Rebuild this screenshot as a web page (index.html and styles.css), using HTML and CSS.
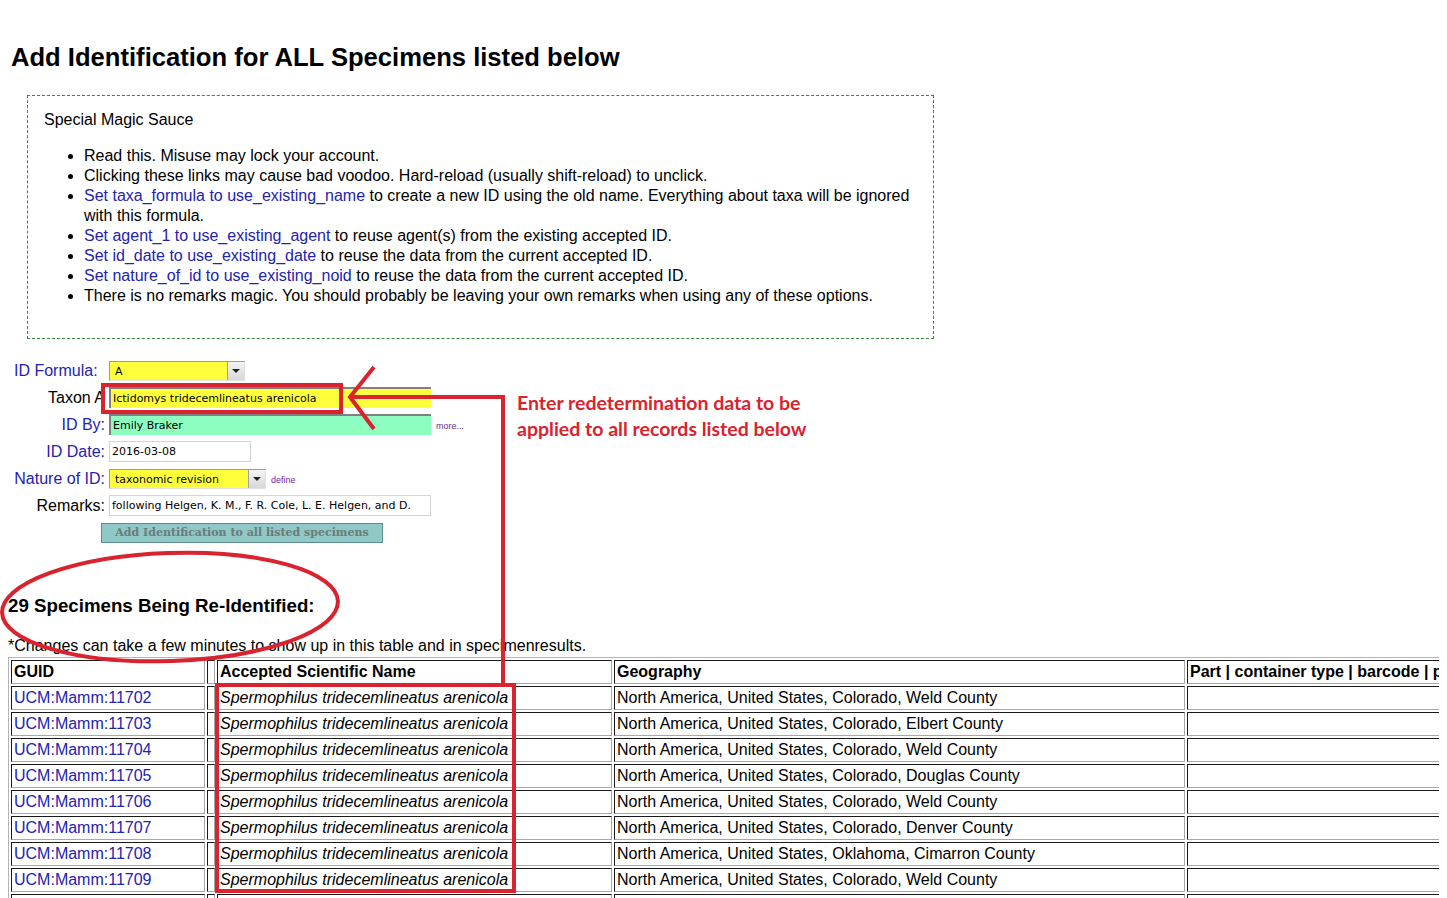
FILE: index.html
```html
<!DOCTYPE html>
<html lang="en">
<head>
    <meta charset="UTF-8">
    <title>Add Identification</title>
    <link rel="stylesheet" href="styles.css">
</head>
<body>
    <h2 class="page-title">Add Identification for ALL Specimens listed below</h2>

    <div class="magic-box">
        <div>Special Magic Sauce</div>
        <ul>
            <li>Read this. Misuse may lock your account.</li>
            <li>Clicking these links may cause bad voodoo. Hard-reload (usually shift-reload) to unclick.</li>
            <li><a href="#">Set taxa_formula to use_existing_name</a> to create a new ID using the old name. Everything about taxa will be ignored with this formula.</li>
            <li><a href="#">Set agent_1 to use_existing_agent</a> to reuse agent(s) from the existing accepted ID.</li>
            <li><a href="#">Set id_date to use_existing_date</a> to reuse the data from the current accepted ID.</li>
            <li><a href="#">Set nature_of_id to use_existing_noid</a> to reuse the data from the current accepted ID.</li>
            <li>There is no remarks magic. You should probably be leaving your own remarks when using any of these options.</li>
        </ul>
    </div>

    <form class="id-form">
        <label class="lbl lbl-link lbl-left">ID Formula:</label>
        <div class="field">
            <div class="fake-select sel-formula"><span class="sel-text">A</span><span class="sel-arrow"></span></div>
        </div>

        <label class="lbl">Taxon A</label>
        <div class="field"><input class="txt txt-yellow" type="text" value="Ictidomys tridecemlineatus arenicola"></div>

        <label class="lbl lbl-link">ID By:</label>
        <div class="field"><input class="txt txt-green" type="text" value="Emily Braker"><span class="tiny-link">more...</span></div>

        <label class="lbl lbl-link">ID Date:</label>
        <div class="field"><input class="txt txt-plain txt-date" type="text" value="2016-03-08"></div>

        <label class="lbl lbl-link">Nature of ID:</label>
        <div class="field">
            <div class="fake-select sel-nature"><span class="sel-text">taxonomic revision</span><span class="sel-arrow"></span></div>
            <span class="tiny-link">define</span>
        </div>

        <label class="lbl">Remarks:</label>
        <div class="field"><input class="txt txt-plain" type="text" value="following Helgen, K. M., F. R. Cole, L. E. Helgen, and D."></div>

        <div class="form-actions">
            <button type="button" class="add-btn">Add Identification to all listed specimens</button>
        </div>
    </form>

    <h3 class="count-title">29 Specimens Being Re-Identified:</h3>
    <div class="note">*Changes can take a few minutes to show up in this table and in specimenresults.</div>

    <table class="spec-table">
        <tr>
            <th class="c-guid">GUID</th>
            <th class="c-blank"></th>
            <th class="c-name">Accepted Scientific Name</th>
            <th class="c-geo">Geography</th>
            <th class="c-part">Part | container type | barcode | part remarks</th>
        </tr>
        <tr><td><a href="#">UCM:Mamm:11702</a></td><td></td><td><i>Spermophilus tridecemlineatus arenicola</i></td><td>North America, United States, Colorado, Weld County</td><td></td></tr>
        <tr><td><a href="#">UCM:Mamm:11703</a></td><td></td><td><i>Spermophilus tridecemlineatus arenicola</i></td><td>North America, United States, Colorado, Elbert County</td><td></td></tr>
        <tr><td><a href="#">UCM:Mamm:11704</a></td><td></td><td><i>Spermophilus tridecemlineatus arenicola</i></td><td>North America, United States, Colorado, Weld County</td><td></td></tr>
        <tr><td><a href="#">UCM:Mamm:11705</a></td><td></td><td><i>Spermophilus tridecemlineatus arenicola</i></td><td>North America, United States, Colorado, Douglas County</td><td></td></tr>
        <tr><td><a href="#">UCM:Mamm:11706</a></td><td></td><td><i>Spermophilus tridecemlineatus arenicola</i></td><td>North America, United States, Colorado, Weld County</td><td></td></tr>
        <tr><td><a href="#">UCM:Mamm:11707</a></td><td></td><td><i>Spermophilus tridecemlineatus arenicola</i></td><td>North America, United States, Colorado, Denver County</td><td></td></tr>
        <tr><td><a href="#">UCM:Mamm:11708</a></td><td></td><td><i>Spermophilus tridecemlineatus arenicola</i></td><td>North America, United States, Oklahoma, Cimarron County</td><td></td></tr>
        <tr><td><a href="#">UCM:Mamm:11709</a></td><td></td><td><i>Spermophilus tridecemlineatus arenicola</i></td><td>North America, United States, Colorado, Weld County</td><td></td></tr>
        <tr><td><a href="#">UCM:Mamm:11710</a></td><td></td><td><i>Spermophilus tridecemlineatus arenicola</i></td><td>North America, United States, Colorado, Weld County</td><td></td></tr>
    </table>

    <!-- red markup drawn over the screenshot -->
    <svg class="markup" width="1447" height="898" viewBox="0 0 1447 898">
        <g fill="none" stroke="#d9232e" stroke-width="4" stroke-linejoin="miter">
            <rect x="103" y="385" width="238" height="27"/>
            <polyline points="374,367 350,397 374,429"/>
            <polyline points="350,397 503,397 503,685"/>
            <rect x="217" y="685" width="297" height="206"/>
            <ellipse cx="170" cy="607" rx="168" ry="54" transform="rotate(-2 170 607)"/>
        </g>
    </svg>
    <div class="callout">Enter redetermination data to be<br>applied to all records listed below</div>
</body>
</html>
```

FILE: styles.css
```css
html {
    overflow: hidden;
}

body {
    margin: 8px;
    font-family: "Liberation Sans", Arial, sans-serif;
    font-size: 16px;
    color: #000;
    background: #fff;
}

a {
    color: #2323b0;
    text-decoration: none;
}

.page-title {
    font-size: 25.6px;
    font-weight: bold;
    margin: 35px 0 23px 3px;
}

.magic-box {
    width: 907px;
    box-sizing: border-box;
    margin-left: 19px;
    border: 1px dashed #3b873b;
    padding: 14px 16px 16px;
    line-height: 20px;
}

.magic-box ul {
    margin: 16px 0;
    padding-left: 40px;
}

/* form */
.id-form {
    display: grid;
    grid-template-columns: 91px 1fr;
    grid-auto-rows: 27px;
    column-gap: 4px;
    align-items: center;
    margin: 18px 0 0 6px;
}

.lbl {
    text-align: right;
    white-space: nowrap;
}

.lbl-left {
    text-align: left;
}

.lbl-link {
    color: #2323b0;
}

.field {
    display: flex;
    align-items: center;
}

.txt {
    box-sizing: border-box;
    width: 322px;
    height: 21px;
    margin: 0;
    padding: 0 2px;
    font-family: "DejaVu Sans", Verdana, sans-serif;
    font-size: 11px;
    color: #000;
    outline: none;
}

.txt-yellow {
    background: #ffff3c;
    border: 2px solid;
    border-color: #808080 #ffffff #ffffff #808080;
    border-width: 2px 0 0 2px;
}

.txt-green {
    background: #8dfdc0;
    border: 2px solid;
    border-color: #808080 #ffffff #ffffff #808080;
    border-width: 2px 0 0 2px;
}

.txt-plain {
    background: #fff;
    border: 1px solid #d4d4d4;
}

.txt-date {
    width: 142px;
}

.tiny-link {
    font-size: 9px;
    color: #6a2aa0;
    margin-left: 5px;
    padding-top: 2px;
}

.fake-select {
    box-sizing: border-box;
    display: flex;
    height: 20px;
    background: #ffff3c;
    border: 1px solid;
    border-color: #9a9a9a #e0e0e0 #e0e0e0 #9a9a9a;
    font-family: "DejaVu Sans", Verdana, sans-serif;
    font-size: 11px;
}

.sel-formula {
    width: 136px;
}

.sel-nature {
    width: 157px;
}

.sel-text {
    flex: 1;
    padding: 3px 0 0 5px;
}

.sel-arrow {
    width: 16px;
    background: linear-gradient(#f4f4f4, #d8d8d8);
    border-left: 1px solid #a0a0a0;
    display: flex;
    align-items: center;
    justify-content: center;
}

.sel-arrow::after {
    content: "";
    border-left: 4px solid transparent;
    border-right: 4px solid transparent;
    border-top: 4px solid #222;
}

.form-actions {
    grid-column: 1 / 3;
    padding-left: 87px;
}

.add-btn {
    width: 282px;
    height: 20px;
    padding: 0;
    background: #8fc8c6;
    border: 1px solid #5a8f8d;
    color: #6a7c7b;
    font-family: "DejaVu Serif", Georgia, serif;
    font-weight: bold;
    font-size: 11px;
}

/* specimens */
.count-title {
    font-size: 18.72px;
    margin: 49px 0 20px;
}

.note {
    line-height: 18.4px;
}

.spec-table {
    table-layout: fixed;
    width: 1604px;
    margin-top: 2px;
    border-collapse: separate;
    border-spacing: 2px;
    border: 1px solid #b4b4b4;
    line-height: 18px;
}

.spec-table th,
.spec-table td {
    padding: 2px;
    border: 1px solid;
    border-color: #1a1a1a #a8a8a8 #a8a8a8 #1a1a1a;
    text-align: left;
    white-space: nowrap;
    overflow: hidden;
}

.spec-table td {
    height: 18px;
}

.c-guid { width: 188px; }
.c-blank { width: 2px; }
.c-name { width: 389px; }
.c-geo { width: 565px; }
.c-part { width: 416px; }

/* red annotation layer */
.markup {
    position: absolute;
    left: 0;
    top: 0;
    pointer-events: none;
}

.callout {
    position: absolute;
    left: 517px;
    top: 390px;
    color: #d9232e;
    font-family: Lato, "Open Sans", sans-serif;
    font-weight: bold;
    font-size: 19.5px;
    line-height: 26px;
}
```
